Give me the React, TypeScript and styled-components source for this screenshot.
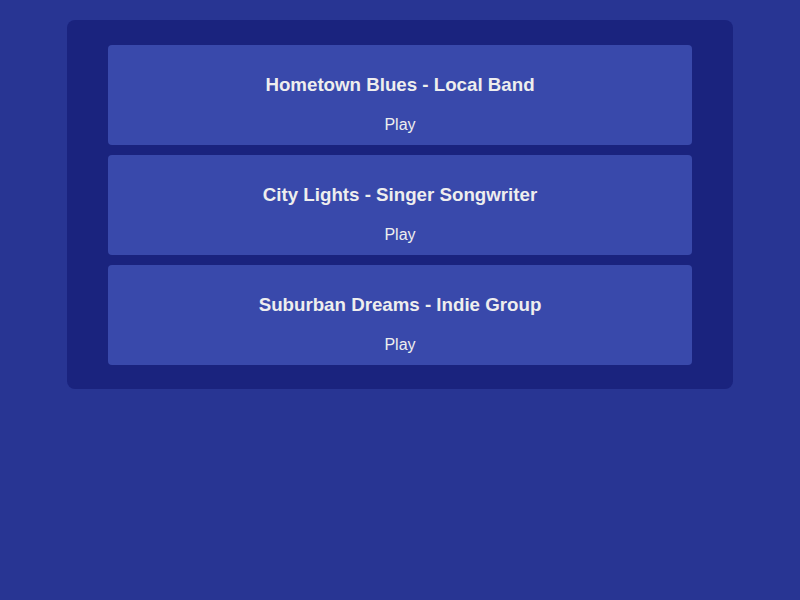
import React from "react";
import styled, { createGlobalStyle } from "styled-components";

const Global = createGlobalStyle`
  html, body { margin: 0; padding: 0; background: #283593; }
  body { font-family: "Liberation Sans", Arial, sans-serif; }
`;

const Page = styled.div`
  display: flex;
  justify-content: center;
  padding-top: 20px;
`;

const Panel = styled.div`
  width: 666px;
  box-sizing: border-box;
  background: #1a237e;
  border-radius: 8px;
  padding: 25px 41px 24px;
  display: flex;
  flex-direction: column;
  gap: 10px;
`;

const Card = styled.div`
  background: #3949ab;
  border-radius: 4px;
  height: 100px;
  box-sizing: border-box;
  padding-top: 29px;
  display: flex;
  flex-direction: column;
  align-items: center;
`;

const Title = styled.h3`
  margin: 0;
  font-size: 18.72px;
  line-height: 21px;
  font-weight: 700;
  color: #eeeeee;
`;

const PlayButton = styled.button`
  margin-top: 21px;
  background: transparent;
  border: none;
  padding: 0;
  font-family: "Liberation Sans", Arial, sans-serif;
  font-size: 16px;
  line-height: 18px;
  color: #eeeeee;
  cursor: pointer;
`;

const songs = [
  "Hometown Blues - Local Band",
  "City Lights - Singer Songwriter",
  "Suburban Dreams - Indie Group",
];

export default function App() {
  return (
    <>
      <Global />
      <Page>
        <Panel>
          {songs.map((s) => (
            <Card key={s}>
              <Title>{s}</Title>
              <PlayButton>Play</PlayButton>
            </Card>
          ))}
        </Panel>
      </Page>
    </>
  );
}
